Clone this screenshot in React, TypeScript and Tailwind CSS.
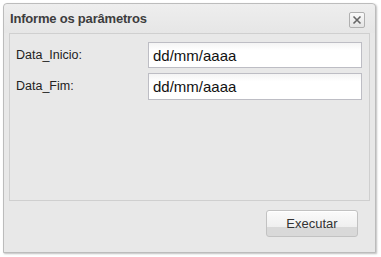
export default function App() {
  return (
    <div
      className="w-[381px] h-[257px] bg-white pt-[3px] pl-[3px]"
      style={{ fontFamily: '"Liberation Sans", Arial, sans-serif' }}
    >
      <div className="w-[373px] h-[250px] flex flex-col rounded-t-[4px] border border-[#bcbcbc] bg-[#e8e8e8] shadow-[1px_1px_2px_rgba(0,0,0,0.25)]">
        <div className="h-[29px] flex items-center justify-between pl-[6px] pr-[10px] bg-gradient-to-b from-[#eeeeee] to-[#e6e6e6] rounded-t-[4px]">
          <span className="text-[13px] font-bold text-[#3d3d3d] tracking-[-0.2px]">
            Informe os parâmetros
          </span>
          <button
            type="button"
            className="w-[16px] h-[16px] mt-[2px] flex items-center justify-center border border-[#b0b0b0] bg-gradient-to-b from-[#fafafa] to-[#e4e4e4] rounded-[2px]"
          >
            <svg width="10" height="10" viewBox="0 0 10 10">
              <path d="M1.5 1.5 L8.5 8.5 M8.5 1.5 L1.5 8.5" stroke="#666" strokeWidth="1.6" />
            </svg>
          </button>
        </div>
        <div className="mx-[5px] h-[168px] border border-[#cfcfcf] bg-[#e8e8e8] pt-[8px] pl-[6px] pr-[7px] flex flex-col gap-[5px]">
          <div className="flex items-center justify-between">
            <label className="text-[12.5px] text-[#222]">Data_Inicio:</label>
            <input
              type="text"
              defaultValue="dd/mm/aaaa"
              className="w-[214px] h-[26px] border border-[#bdbdc4] bg-gradient-to-b from-[#f4f4f4] to-white to-[30%] px-[4px] text-[15px] text-[#111] outline-none"
            />
          </div>
          <div className="flex items-center justify-between">
            <label className="text-[12.5px] text-[#222]">Data_Fim:</label>
            <input
              type="text"
              defaultValue="dd/mm/aaaa"
              className="w-[214px] h-[27px] border border-[#bdbdc4] bg-gradient-to-b from-[#f4f4f4] to-white to-[30%] px-[4px] text-[15px] text-[#111] outline-none"
            />
          </div>
        </div>
        <div className="flex justify-end pr-[17px] pt-[9px]">
          <button
            type="button"
            className="w-[92px] h-[27px] rounded-[3px] border border-[#c2c2c2] bg-gradient-to-b from-[#fbfbfb] via-[#efefef] via-[65%] to-[#d9d9d9] to-[66%] text-[13px] text-[#333] shadow-[inset_0_1px_0_#fff]"
          >
            Executar
          </button>
        </div>
      </div>
    </div>
  );
}
